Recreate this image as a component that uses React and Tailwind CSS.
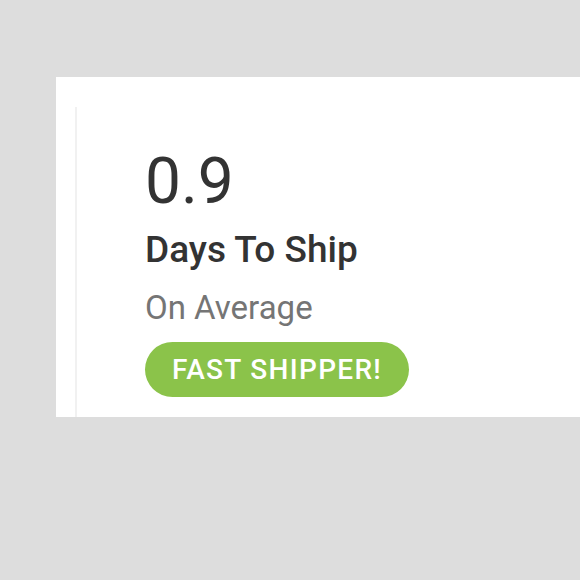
export default function App() {
  return (
    <div className="min-h-[580px] bg-[#dddddd] pt-[77px] pl-[56px]" style={{ fontFamily: 'Roboto, "Noto Sans", sans-serif' }}>
      <div className="bg-white h-[340px] pt-[30px] pl-[19px] flex">
        <div className="border-l-2 border-[#f1f1f1] pl-[68px] pt-[43px] flex flex-col items-start">
          <div className="text-[64px] leading-none text-[#333333]">0.9</div>
          <div className="mt-[17px] text-[37px] leading-none font-medium text-[#333333]">Days To Ship</div>
          <div className="mt-[23px] text-[33px] leading-none text-[#757575]">On Average</div>
          <div className="mt-[18px] h-[55px] w-[264px] rounded-full bg-[#8bc34a] flex items-center justify-center text-white text-[28px] font-medium tracking-[1.3px]">
            FAST SHIPPER!
          </div>
        </div>
      </div>
    </div>
  );
}
